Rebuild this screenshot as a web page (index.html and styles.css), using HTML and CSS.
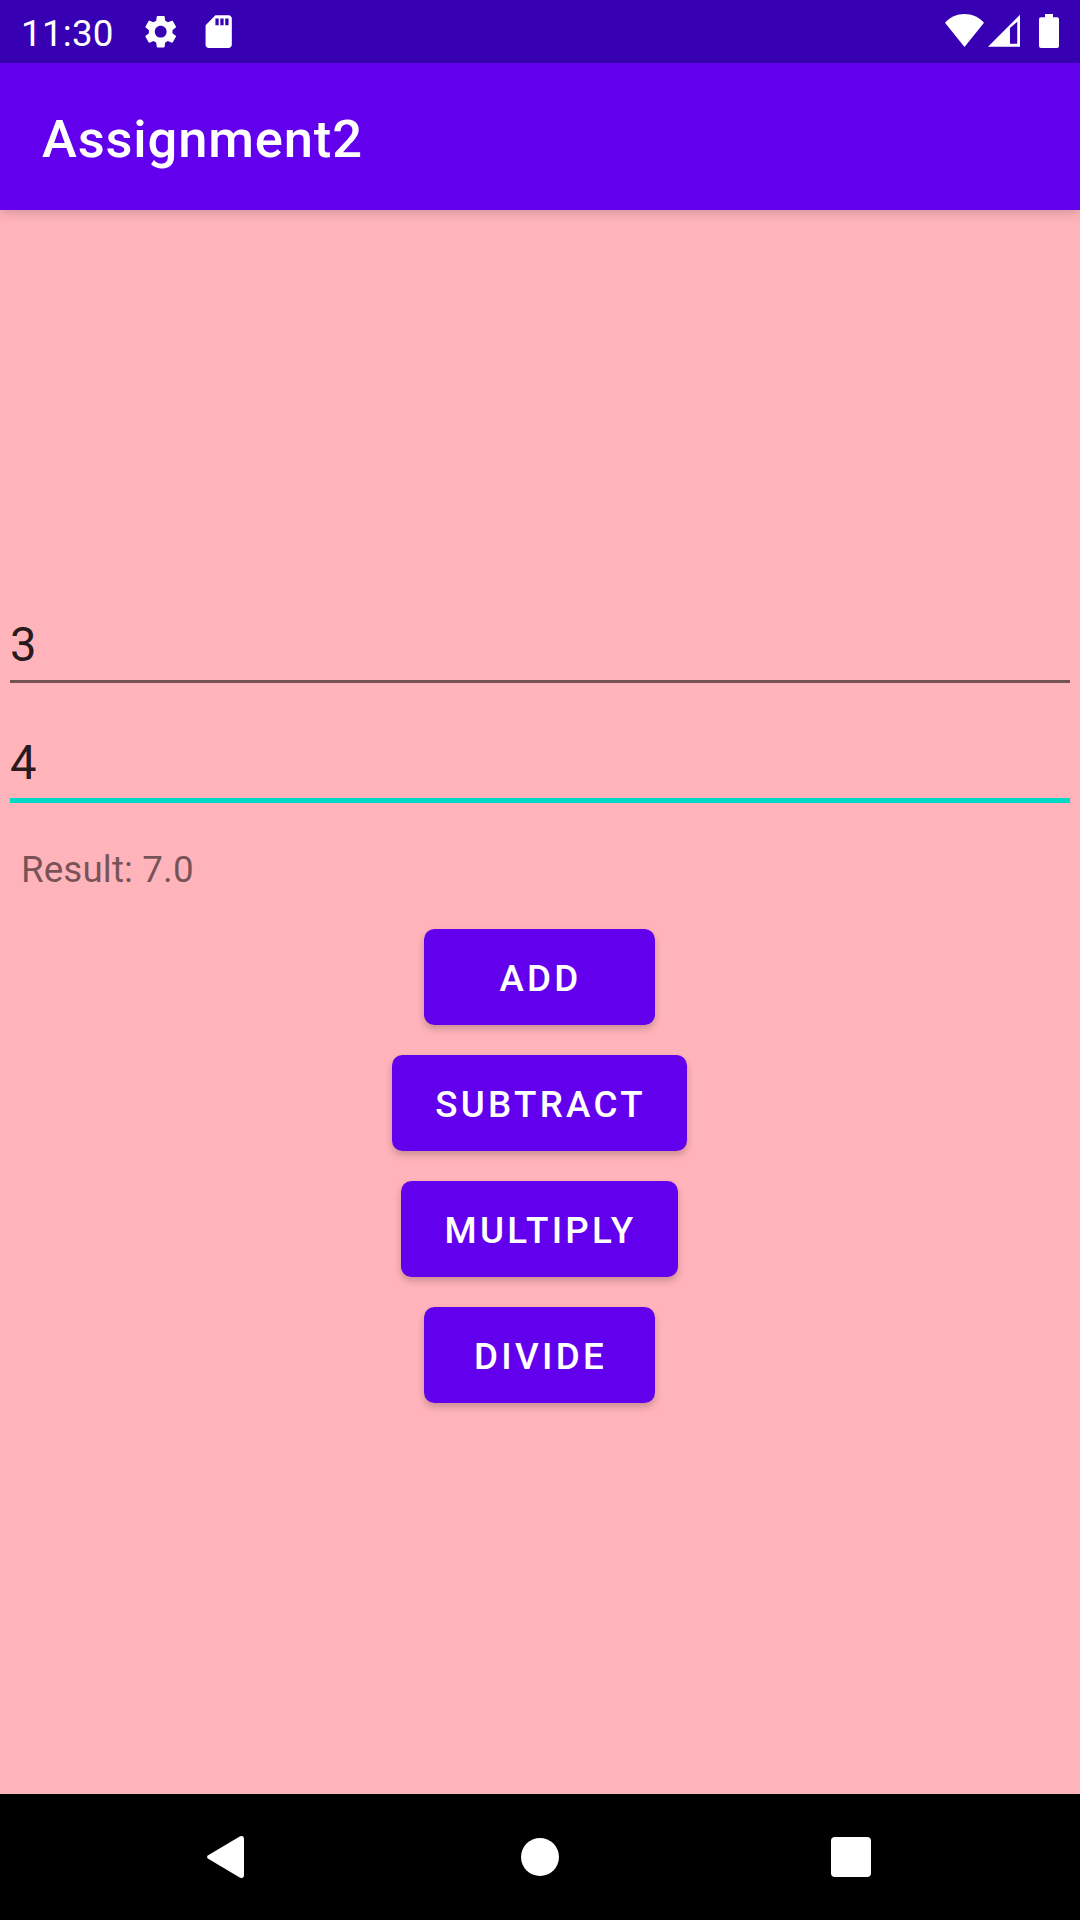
FILE: index.html
```html
<!DOCTYPE html>
<html lang="en">
<head>
<meta charset="utf-8">
<title>Assignment2</title>
<link rel="stylesheet" href="styles.css">
</head>
<body>
<div class="screen">
  <div class="status-bar">
    <span class="clock">11:30</span>
    <svg class="status-icon gear" viewBox="0 0 24 24"><path d="M19.14 12.94c.04-.3.06-.61.06-.94 0-.32-.02-.64-.07-.94l2.03-1.58c.18-.14.23-.41.12-.61l-1.92-3.32c-.12-.22-.37-.29-.59-.22l-2.39.96c-.5-.38-1.03-.7-1.62-.94l-.36-2.54c-.04-.24-.24-.41-.48-.41h-3.84c-.24 0-.43.17-.47.41l-.36 2.54c-.59.24-1.13.57-1.62.94l-2.39-.96c-.22-.08-.47 0-.59.22L2.74 8.87c-.12.21-.08.47.12.61l2.03 1.58c-.05.3-.09.63-.09.94s.02.64.07.94l-2.03 1.58c-.18.14-.23.41-.12.61l1.92 3.32c.12.22.37.29.59.22l2.39-.96c.5.38 1.03.7 1.62.94l.36 2.54c.05.24.24.41.48.41h3.84c.24 0 .44-.17.47-.41l.36-2.54c.59-.24 1.13-.56 1.62-.94l2.39.96c.22.08.47 0 .59-.22l1.92-3.32c.12-.22.07-.47-.12-.61l-2.01-1.58zM12 15.6c-1.98 0-3.6-1.62-3.6-3.6s1.62-3.6 3.6-3.6 3.6 1.62 3.6 3.6-1.62 3.6-3.6 3.6z"/></svg>
    <svg class="status-icon" viewBox="0 0 24 24"><path d="M18 2h-8L4.02 8 4 20c0 1.1.9 2 2 2h12c1.1 0 2-.9 2-2V4c0-1.1-.9-2-2-2zm-6 6h-2V4h2v4zm3 0h-2V4h2v4zm3 0h-2V4h2v4z"/></svg>
    <div class="system-icons">
      <svg class="wifi" viewBox="0 0 39 33"><path d="M19.5 33 0 8.8C5 3.2 12 0 19.5 0S34 3.2 39 8.8z"/></svg>
      <svg class="signal" viewBox="0 0 33 33"><path fill-rule="evenodd" d="M33 0v33H0zM22.3 14v16h7.4V7.7z"/></svg>
      <svg class="battery" viewBox="0 0 20 34"><path d="M6 0h8v3.3h4a2 2 0 0 1 2 2V32a2 2 0 0 1-2 2H2a2 2 0 0 1-2-2V5.300a2 2 0 0 1 2-2h4z"/></svg>
    </div>
  </div>
  <header class="app-bar"><h1 class="title">Assignment2</h1></header>
  <main class="content">
    <div class="field">3</div>
    <div class="field focused">4</div>
    <p class="result">Result: 7.0</p>
    <div class="actions">
      <button class="btn">ADD</button>
      <button class="btn">SUBTRACT</button>
      <button class="btn">MULTIPLY</button>
      <button class="btn">DIVIDE</button>
    </div>
  </main>
  <nav class="nav-bar">
    <svg class="back" viewBox="0 0 37 42"><path d="M1.200 19.200 32.700.4Q37-1.200 37 3v36q0 4.200-4.300 2.600L1.200 22.800Q-1.200 21 1.200 19.200z"/></svg>
    <svg class="home" viewBox="0 0 38 38"><circle cx="19" cy="19" r="19"/></svg>
    <svg class="recents" viewBox="0 0 40 40"><rect width="40" height="40" rx="4"/></svg>
  </nav>
</div>
</body>
</html>
```
FILE: styles.css
```css
* { box-sizing: border-box; }
body { margin: 0; font-family: Roboto, sans-serif; }
svg { display: block; fill: #fff; flex: none; }

.screen {
  display: flex;
  flex-direction: column;
  width: 1080px;
  height: 1920px;
  overflow: hidden;
  background: #ffb3ba;
}

.status-bar {
  display: flex;
  align-items: center;
  height: 63px;
  padding: 0 21px;
  background: #3700b3;
  color: #fff;
}
.clock { width: 120px; font-size: 36.75px; line-height: 43px; padding-top: 3px; letter-spacing: .25px; }
.status-icon { width: 39.4px; height: 39.4px; }
.gear { margin-right: 18.600px; }
.system-icons { display: flex; align-items: center; margin-left: auto; }
.wifi { width: 39px; height: 33px; margin-right: 3.500px; margin-bottom: 2px; }
.signal { width: 32.500px; height: 33px; margin-right: 19px; margin-bottom: 2px; }
.battery { width: 20px; height: 34px; margin-bottom: 1px; }

.app-bar {
  display: flex;
  align-items: center;
  height: 147px;
  padding: 5px 42px 0;
  background: #6200ee;
  box-shadow: 0 3px 10px rgba(0, 0, 0, .16);
}
.title { margin: 0; font-size: 52.5px; line-height: 62px; font-weight: 500; letter-spacing: .84px; color: #fff; }

.content { flex: 1; padding-top: 400px; }
.field {
  margin: 0 10px 45px;
  font-size: 47.25px;
  line-height: 70px;
  color: rgba(0, 0, 0, .87);
  border-bottom: 3px solid rgba(0, 0, 0, .54);
}
.field.focused { margin-bottom: 37px; border-bottom: 5px solid #03dac5; }
.result {
  margin: 0 21px 29px;
  font-size: 36.75px;
  line-height: 60px;
  letter-spacing: .12px;
  color: rgba(0, 0, 0, .54);
}
.actions {
  display: flex;
  flex-direction: column;
  align-items: center;
  gap: 30px;
  padding-right: 1px;
}
.btn {
  min-width: 231px;
  height: 96px;
  padding: 2px 41.5px 0 43.5px;
  border: 0;
  border-radius: 10.5px;
  background: #6200ee;
  color: #fff;
  font: 500 36.75px/43px Roboto, sans-serif;
  letter-spacing: 3.28px;
  box-shadow: 0 4px 7px rgba(0, 0, 0, .2);
}

.nav-bar {
  display: flex;
  align-items: center;
  height: 126px;
  padding-left: 207px;
  background: #000;
}
.back { width: 37px; height: 42px; margin-right: 277px; }
.home { width: 38px; height: 38px; margin-right: 272px; }
.recents { width: 40px; height: 40px; }
```
